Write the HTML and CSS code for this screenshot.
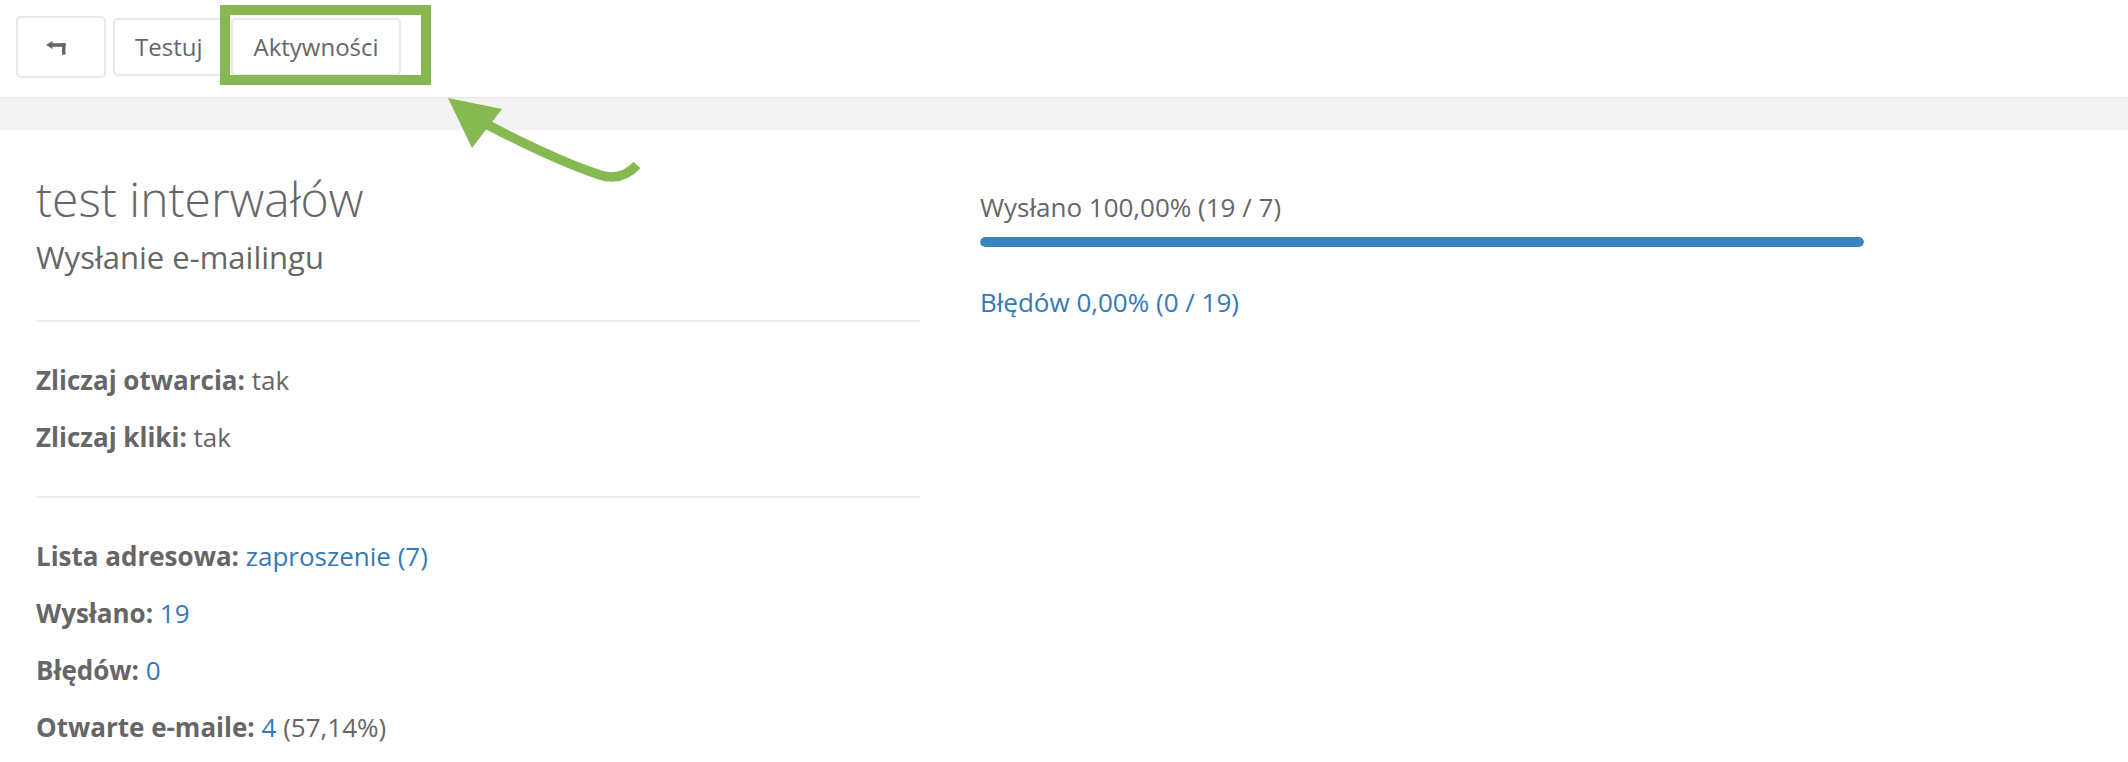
FILE: index.html
```html
<!DOCTYPE html>
<html lang="pl">
<head>
<meta charset="utf-8">
<title>test interwałów</title>
<link rel="stylesheet" href="styles.css">
</head>
<body>
<header class="toolbar">
  <button class="btn btn-back" type="button" aria-label="Wstecz">
    <svg class="back-icon" width="20" height="14" viewBox="0 0 20 14" aria-hidden="true">
      <path d="M0 4 L6.5 0 L6.5 8 Z" fill="#666"/>
      <rect x="6" y="2.2" width="13.5" height="3.6" fill="#666"/>
      <rect x="16" y="2.2" width="3.5" height="11.5" fill="#666"/>
    </svg>
  </button>
  <button class="btn" type="button">Testuj</button>
  <button class="btn" type="button">Aktywności</button>
</header>
<div class="band"></div>

<main class="content">
  <section class="col-left">
    <h1 class="title">test interwałów</h1>
    <p class="subtitle">Wysłanie e-mailingu</p>
    <hr class="sep">
    <div class="block">
      <p class="row"><b>Zliczaj otwarcia:</b> tak</p>
      <p class="row"><b>Zliczaj kliki:</b> tak</p>
    </div>
    <hr class="sep">
    <div class="block">
      <p class="row"><b>Lista adresowa:</b> <a href="#">zaproszenie (7)</a></p>
      <p class="row"><b>Wysłano:</b> <a href="#">19</a></p>
      <p class="row"><b>Błędów:</b> <a href="#">0</a></p>
      <p class="row"><b>Otwarte e-maile:</b> <a href="#">4</a> (57,14%)</p>
    </div>
  </section>
  <section class="col-right">
    <p class="stat">Wysłano 100,00% (19 / 7)</p>
    <div class="progress"><div class="progress-bar" style="width:100%"></div></div>
    <p class="stat stat-link"><a href="#">Błędów 0,00% (0 / 19)</a></p>
  </section>
</main>

<div class="highlight" aria-hidden="true"></div>
<svg class="annot-arrow" width="2128" height="762" viewBox="0 0 2128 762" aria-hidden="true">
  <path d="M486 124 Q555 160 600 175 Q621 182 637 165" fill="none" stroke="#87b952" stroke-width="9.5"/>
  <path d="M448 98 L502 109 L472 148 Z" fill="#87b952"/>
</svg>
</body>
</html>
```

FILE: styles.css
```css
* { box-sizing: border-box; }

html, body {
  margin: 0;
  padding: 0;
  background: #fff;
}

body {
  font-family: "Open Sans", "Liberation Sans", sans-serif;
  color: #666;
  width: 2128px;
  height: 762px;
  overflow: hidden;
  position: relative;
}

.toolbar {
  height: 97px;
  display: flex;
  align-items: center;
  gap: 7px;
  padding: 0 0 4px 16px;
}

.btn {
  height: 58px;
  padding: 0 20px;
  border: 2px solid #e8e8e8;
  border-radius: 5px;
  background: #fff;
  font-family: "Open Sans", "Liberation Sans", sans-serif;
  font-size: 24px;
  color: #666;
  line-height: 1;
  display: flex;
  align-items: center;
}

.btn-back {
  width: 90px;
  height: 62px;
  justify-content: flex-start;
  padding: 0 0 0 28px;
}

.back-icon { display: block; margin-top: 2px; }

.band {
  height: 33px;
  background: #f2f2f2;
  border-top: 1px solid #e6e6e6;
}

.content {
  display: grid;
  grid-template-columns: 884px 884px;
  column-gap: 60px;
  padding: 0 36px;
}

.col-left { padding-top: 43px; }

.title {
  margin: 0;
  font-size: 48px;
  font-weight: 300;
  line-height: 52px;
  color: #666;
}

.subtitle {
  margin: 14px 0 0;
  font-size: 31px;
  font-weight: 400;
  line-height: 36px;
  color: #666;
}

.sep {
  margin: 45px 0 0;
  border: 0;
  height: 2px;
  background: #eeeeee;
}

.block { padding: 41px 0 42px; }
.block + .sep { margin-top: 0; }

.row {
  margin: 0;
  font-size: 26px;
  line-height: 34px;
}

.row + .row { margin-top: 23px; }

.row b { font-weight: 700; color: #666; }

a { color: #337ab7; text-decoration: none; }

.col-right { padding-top: 59px; }

.stat {
  margin: 0;
  font-size: 26px;
  line-height: 36px;
  color: #666;
}

.progress {
  margin-top: 12px;
  height: 10px;
  border-radius: 5px;
  background: #f0f0f0;
  overflow: hidden;
}

.progress-bar {
  height: 100%;
  background: #3786c0;
  border-radius: 5px;
}

.stat-link { margin-top: 37px; }

.highlight {
  position: absolute;
  left: 220px;
  top: 5px;
  width: 211px;
  height: 80px;
  border: 10.5px solid #87b952;
}

.annot-arrow {
  position: absolute;
  left: 0;
  top: 0;
  pointer-events: none;
}
```
